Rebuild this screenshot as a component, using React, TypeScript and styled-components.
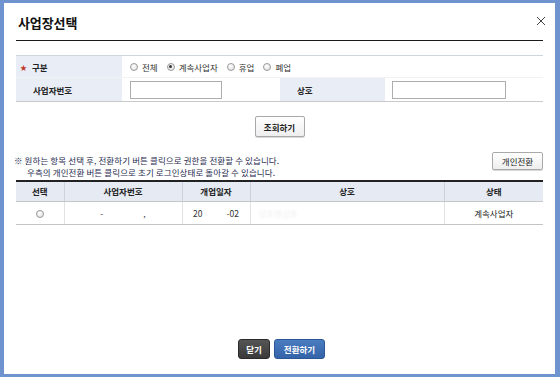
import React from 'react';
import styled, { createGlobalStyle } from 'styled-components';

const Global = createGlobalStyle`
  html, body { margin: 0; padding: 0; background: #fff; }
  body { font-family: "Noto Sans CJK KR", "Noto Sans", sans-serif; }
  * { box-sizing: border-box; }
`;

const Frame = styled.div`
  width: 560px;
  height: 377px;
  border-style: solid;
  border-color: #6f93cf;
  border-width: 3px 5px 3px 4px;
  background: #fff;
  display: flex;
  flex-direction: column;
  padding: 0 12px;
  font-size: 8.5px;
  color: #222;
`;

const Header = styled.div`
  height: 38px;
  display: flex;
  align-items: center;
  justify-content: space-between;
  border-bottom: 1px solid #1a1a1a;
  padding: 2px 0 0 2px;
`;

const Title = styled.h1`
  margin: 0;
  font-size: 13px;
  font-weight: 700;
  color: #111;
  letter-spacing: -0.1px;
`;

const CloseBtn = styled.button`
  border: 0;
  background: none;
  padding: 0;
  margin: -4px -4px 0 0;
  width: 12px;
  height: 12px;
  display: flex;
  align-items: center;
  justify-content: center;
  cursor: pointer;
`;

const FormGrid = styled.div`
  margin-top: 14px;
  display: grid;
  grid-template-columns: 106px 158px 105px 1fr;
  grid-template-rows: 22px 23px;
  border-top: 1px solid #cfd5de;
  border-bottom: 1px solid #c9c9c9;
`;

const FormCell = styled.div<{ $label?: boolean; $span?: number; $last?: boolean; $pad?: number }>`
  display: flex;
  align-items: center;
  grid-column: span ${p => p.$span ?? 1};
  background: ${p => (p.$label ? '#e8edf6' : '#fff')};
  padding-left: ${p => (p.$label ? 17 : p.$pad ?? 8)}px;
  border-bottom: ${p => (p.$last ? '0' : '1px solid #f2f2f2')};
  font-weight: ${p => (p.$label ? 700 : 400)};
  color: ${p => (p.$label ? '#222' : '#333')};
`;

const Star = styled.span`
  color: #c0392b;
  font-size: 7px;
  margin: 0 5px 0 -13px;
`;

const RadioGroup = styled.div`
  display: flex;
  align-items: center;
  gap: 9px;
`;

const RadioItem = styled.label`
  display: flex;
  align-items: center;
  gap: 4px;
`;

const RadioDot = styled.span<{ $checked?: boolean }>`
  width: 8px;
  height: 8px;
  border-radius: 50%;
  border: 1px solid #9a9a9a;
  background: radial-gradient(circle at 40% 35%, #fff 0%, #e2e2e2 80%);
  display: inline-flex;
  align-items: center;
  justify-content: center;
  vertical-align: middle;
  &::after {
    content: '';
    width: 3px;
    height: 3px;
    border-radius: 50%;
    background: ${p => (p.$checked ? '#333' : 'transparent')};
  }
`;

const TextInput = styled.input<{ $w: number }>`
  width: ${p => p.$w}px;
  height: 18px;
  border: 1px solid #adadad;
  padding: 0 3px;
  font-size: 9px;
  outline: none;
`;

const Center = styled.div`
  display: flex;
  justify-content: center;
  margin-top: 14px;
`;

const GrayButton = styled.button<{ $w: number; $h: number; $bold?: boolean }>`
  width: ${p => p.$w}px;
  height: ${p => p.$h}px;
  border: 1px solid #a9a9a9;
  border-radius: 2px;
  background: linear-gradient(#ffffff, #eeeeee);
  font-family: inherit;
  font-size: 8.5px;
  font-weight: ${p => (p.$bold ? 700 : 400)};
  color: #222;
  padding: 0;
  box-shadow: 0 1px 0 #d8d8d8;
  cursor: pointer;
`;

const NoteRow = styled.div`
  display: flex;
  justify-content: space-between;
  align-items: flex-start;
  margin-top: 15px;
`;

const Notes = styled.div`
  padding-top: 2px;
  line-height: 12px;
  color: #1f2b4f;
  margin-left: -2px;
  letter-spacing: 0.1px;
`;

const NoteLine = styled.div<{ $indent?: boolean }>`
  padding-left: ${p => (p.$indent ? '13px' : '0')};
  white-space: nowrap;
`;

const Table = styled.table`
  margin-top: 2px;
  width: 100%;
  table-layout: fixed;
  border-collapse: collapse;
  border-top: 2px solid #222;
`;

const Th = styled.th<{ $w?: number }>`
  width: ${p => (p.$w ? `${p.$w}px` : 'auto')};
  height: 20px;
  background: #e5eaf3;
  font-weight: 700;
  color: #222;
  font-size: 8.5px;
  border-bottom: 1px solid #c6c6c6;
  border-left: 1px solid #cdd3dd;
  padding: 0;
  &:first-child { border-left: 0; }
`;

const Td = styled.td<{ $align?: string }>`
  height: 23px;
  padding: 0 8px;
  text-align: ${p => p.$align ?? 'center'};
  border-bottom: 1px solid #c4c4c4;
  border-left: 1px solid #e2e2e2;
  color: #222;
  &:first-child { border-left: 0; }
`;

const Mask = styled.span<{ $gap: number }>`
  display: inline-flex;
  gap: ${p => p.$gap}px;
  color: #333;
`;

const Blur = styled.span`
  color: #ededed;
  filter: blur(0.8px);
`;

const Spacer = styled.div`
  flex: 1;
`;

const Footer = styled.div`
  display: flex;
  justify-content: center;
  gap: 4px;
  padding: 0 0 15px 4px;
`;

const SolidButton = styled.button<{ $w: number; $bg: string; $border: string }>`
  width: ${p => p.$w}px;
  height: 20px;
  border: 1px solid ${p => p.$border};
  border-radius: 3px;
  background: ${p => p.$bg};
  color: #fff;
  font-family: inherit;
  font-size: 8.5px;
  font-weight: 700;
  padding: 0;
  cursor: pointer;
`;

const radios = [
  { label: '전체', checked: false },
  { label: '계속사업자', checked: true },
  { label: '휴업', checked: false },
  { label: '폐업', checked: false },
];

export default function App() {
  return (
    <>
      <Global />
      <Frame>
        <Header>
          <Title>사업장선택</Title>
          <CloseBtn aria-label="close">
            <svg width="10" height="10" viewBox="0 0 10 10">
              <path d="M1 1 L9 9 M9 1 L1 9" stroke="#444" strokeWidth="1" fill="none" />
            </svg>
          </CloseBtn>
        </Header>

        <FormGrid>
          <FormCell $label>
            <Star>★</Star>구분
          </FormCell>
          <FormCell $span={3}>
            <RadioGroup>
              {radios.map(r => (
                <RadioItem key={r.label}>
                  <RadioDot $checked={r.checked} />
                  {r.label}
                </RadioItem>
              ))}
            </RadioGroup>
          </FormCell>
          <FormCell $label $last>사업자번호</FormCell>
          <FormCell $last>
            <TextInput $w={92} />
          </FormCell>
          <FormCell $label $last>상호</FormCell>
          <FormCell $last $pad={7}>
            <TextInput $w={114} />
          </FormCell>
        </FormGrid>

        <Center>
          <GrayButton $w={50} $h={21} $bold>조회하기</GrayButton>
        </Center>

        <NoteRow>
          <Notes>
            <NoteLine>※ 원하는 항목 선택 후, 전환하기 버튼 클릭으로 권한을 전환할 수 있습니다.</NoteLine>
            <NoteLine $indent>우측의 개인전환 버튼 클릭으로 초기 로그인상태로 돌아갈 수 있습니다.</NoteLine>
          </Notes>
          <GrayButton $w={51} $h={18}>개인전환</GrayButton>
        </NoteRow>

        <Table>
          <thead>
            <tr>
              <Th $w={48}>선택</Th>
              <Th $w={118}>사업자번호</Th>
              <Th $w={68}>개업일자</Th>
              <Th $w={194}>상호</Th>
              <Th>상태</Th>
            </tr>
          </thead>
          <tbody>
            <tr>
              <Td>
                <RadioDot />
              </Td>
              <Td>
                <Mask $gap={40}>
                  <span>-</span>
                  <span>,</span>
                </Mask>
              </Td>
              <Td>
                <Mask $gap={24}>
                  <span>20</span>
                  <span>-02</span>
                </Mask>
              </Td>
              <Td $align="left">
                <Blur>상호명상호</Blur>
              </Td>
              <Td>계속사업자</Td>
            </tr>
          </tbody>
        </Table>

        <Spacer />

        <Footer>
          <SolidButton $w={32} $bg="linear-gradient(#555, #3a3a3a)" $border="#2a2a2a">닫기</SolidButton>
          <SolidButton $w={51} $bg="linear-gradient(#4a7cc0, #3463a8)" $border="#2c5597">전환하기</SolidButton>
        </Footer>
      </Frame>
    </>
  );
}
